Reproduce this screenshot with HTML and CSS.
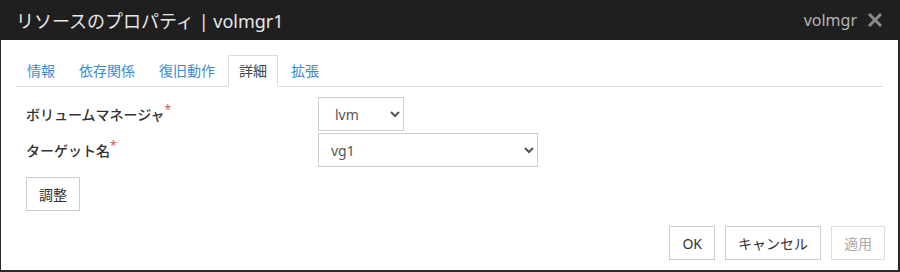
FILE: index.html
```html
<!DOCTYPE html>
<html lang="ja">
<head>
    <meta charset="UTF-8">
    <meta name="viewport" content="width=device-width, initial-scale=1.0">
    <title>リソースのプロパティ</title>
    <link rel="stylesheet" href="styles.css">
</head>
<body>

    <div class="dialog">
        <!-- Title Bar -->
        <div class="dialog-header">
            <span class="dialog-title">リソースのプロパティ | volmgr1</span>
            <div class="header-right">
                <span class="resource-name">volmgr</span>
                <span class="close-btn">
                    <svg width="14" height="14" viewBox="0 0 14 14">
                        <path d="M2 2 L12 12 M12 2 L2 12" stroke="#8a8a8a" stroke-width="3" stroke-linecap="square"/>
                    </svg>
                </span>
            </div>
        </div>

        <div class="dialog-body">
            <!-- Tabs -->
            <ul class="tabs">
                <li class="tab">情報</li>
                <li class="tab">依存関係</li>
                <li class="tab">復旧動作</li>
                <li class="tab active">詳細</li>
                <li class="tab">拡張</li>
            </ul>

            <!-- Detail Form -->
            <div class="form">
                <div class="form-row">
                    <label class="form-label">ボリュームマネージャ<span class="required">*</span></label>
                    <select class="select select-small">
                        <option>lvm</option>
                    </select>
                </div>
                <div class="form-row">
                    <label class="form-label">ターゲット名<span class="required">*</span></label>
                    <select class="select select-wide">
                        <option>vg1</option>
                    </select>
                </div>
                <div class="form-actions">
                    <button class="btn">調整</button>
                </div>
            </div>

            <!-- Footer -->
            <div class="dialog-footer">
                <button class="btn">OK</button>
                <button class="btn">キャンセル</button>
                <button class="btn" disabled>適用</button>
            </div>
        </div>
    </div>

</body>
</html>
```

FILE: styles.css
```css
body { margin: 0; padding: 0; font-family: "Noto Sans", "Noto Sans CJK JP", sans-serif; font-size: 14px; color: #333; background: #2a2a2a; }

/* Dialog frame */
.dialog {
    width: 897px;
    height: 270px;
    margin-left: 1px;
    background: white;
    display: flex;
    flex-direction: column;
}

/* Title Bar */
.dialog-header {
    height: 40px;
    background: #1f1f1f;
    margin-left: -1px;
    margin-right: -2px;
    padding: 0 18px 0 16px;
    display: flex;
    justify-content: space-between;
    align-items: center;
}
.dialog-title { color: #e8e8e8; font-size: 18px; }
.header-right { display: flex; align-items: center; gap: 11px; }
.resource-name { color: #b4b4b4; font-size: 16px; }
.close-btn { display: flex; align-items: center; }

/* Body */
.dialog-body { padding: 15px 15px 10px 15px; display: flex; flex-direction: column; }

/* Tabs */
.tabs {
    list-style: none;
    margin: 0;
    padding: 0;
    display: flex;
    border-bottom: 1px solid #ddd;
}
.tab {
    height: 30px;
    line-height: 30px;
    padding: 0 10px;
    margin-right: 2px;
    margin-bottom: -1px;
    border: 1px solid transparent;
    color: #3d8bcd;
    cursor: pointer;
}
.tab.active { color: #444; border-color: #ddd; border-bottom-color: white; background: white; }

/* Form */
.form { padding: 10px 10px 0 10px; display: flex; flex-direction: column; gap: 2px; }
.form-row { display: flex; align-items: center; height: 34px; }
.form-label { width: 292px; font-weight: 500; color: #333; }
.required { color: #d9534f; font-weight: normal; vertical-align: super; font-size: 12px; line-height: 0; }

.select {
    height: 34px;
    border: 1px solid #ccc;
    border-radius: 0;
    background: white;
    color: #555;
    font-family: inherit;
    font-size: 14px;
    padding: 0 8px;
}
.select-small { width: 86px; padding-left: 12px; }
.select-wide { width: 220px; }

.form-actions { margin-top: 8px; }

/* Buttons */
.btn {
    height: 34px;
    padding: 0 12px;
    border: 1px solid #ccc;
    border-radius: 0;
    background: white;
    color: #333;
    font-family: inherit;
    font-size: 14px;
    cursor: pointer;
}
.btn:disabled { color: #aaa; border-color: #ddd; cursor: default; }

/* Footer */
.dialog-footer { display: flex; justify-content: flex-end; gap: 10px; margin-top: 15px; margin-right: -2px; }
```
